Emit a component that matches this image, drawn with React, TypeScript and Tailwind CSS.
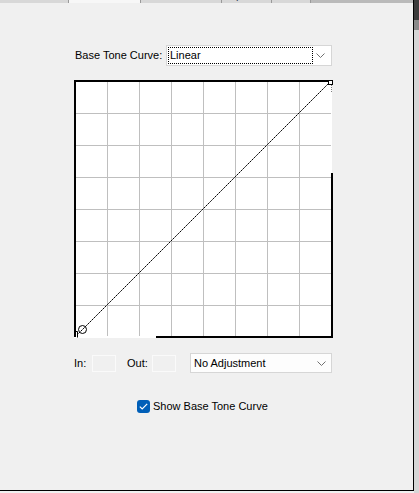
import React from "react";

const font = "font-['Liberation_Sans','Arial',sans-serif]";

function Chevron() {
  return (
    <svg width="9" height="5" viewBox="0 0 9 5" fill="none" aria-hidden="true">
      <path d="M0.5 0.5L4.5 4.5L8.5 0.5" stroke="#707070" strokeWidth="1" />
    </svg>
  );
}

function CurveGraph() {
  const grid = [33, 65, 97, 129, 161, 193, 225];
  return (
    <svg width="259" height="258" viewBox="0 0 259 258" className="block" aria-hidden="true">
      <rect x="0" y="0" width="258" height="258" fill="#ffffff" />
      {grid.map((g) => (
        <line key={`v${g}`} x1={g + 0.5} y1="2" x2={g + 0.5} y2="256" stroke="#bfbfbf" strokeWidth="1" />
      ))}
      {grid.map((g) => (
        <line key={`h${g}`} x1="2" y1={g + 0.5} x2="257" y2={g + 0.5} stroke="#bfbfbf" strokeWidth="1" />
      ))}
      {/* border, with the gaps the original shows */}
      <rect x="0" y="0" width="258" height="2" fill="#000" />
      <rect x="0" y="0" width="2" height="257" fill="#000" />
      <rect x="257" y="93" width="2" height="165" fill="#000" />
      <rect x="82" y="256" width="177" height="2" fill="#000" />
      <line x1="257.5" y1="5" x2="257.5" y2="12" stroke="#808080" strokeWidth="1" strokeDasharray="1 1" />
      {/* base curve */}
      <line x1="3" y1="255" x2="256" y2="2" stroke="#000" strokeWidth="1" strokeDasharray="2 0.6" />
      <circle cx="8.5" cy="249.5" r="4" fill="none" stroke="#000" strokeWidth="1" />
      <rect x="254.5" y="0.5" width="4" height="4" fill="#fff" stroke="#000" strokeWidth="1" />
      <path d="M0.5 251.5H3.5V257.5" stroke="#000" strokeWidth="1" fill="none" />
    </svg>
  );
}

const tabs = [
  { label: "Color Tables", width: "w-[69px]", active: false },
  { label: "Tone Curve", width: "w-[72px]", active: true },
  { label: "Color Matrices", width: "w-[81px]", active: false },
  { label: "Options", width: "w-[50px]", active: false },
  { label: "Chart", width: "w-[39px]", active: false },
];

export default function App() {
  return (
    <div className={`flex h-[493px] w-[419px] overflow-hidden bg-[#f0f0f0] text-[11px] text-black ${font}`}>
      <div className="flex h-[491px] w-[414px] shrink-0 flex-col border-r border-b border-black">
        {/* clipped tab strip */}
        <div className="flex h-[3px] shrink-0 overflow-hidden bg-[#bababa]">
          {tabs.map((tab) => (
            <div
              key={tab.label}
              className={`${tab.width} h-[3px] shrink-0 overflow-hidden border-r border-[#9a9a9a] text-center ${
                tab.active ? "bg-[#f7f7f7]" : "bg-[#d8d8d8]"
              }`}
            >
              <div className="-mt-[11px] leading-[13px] text-[#2a3550]">{tab.label}</div>
            </div>
          ))}
        </div>

        <div className="pl-[74px]">
          <div className="mt-[42px] flex h-[21px] items-center">
            <span className="w-[92px] whitespace-nowrap pl-px">Base Tone Curve:</span>
            <div className="flex h-[21px] w-[166px] items-center border border-[#d6d6d6] bg-white pl-[1px] pr-[6px]">
              <div className="flex h-[17px] w-[145px] items-center border border-dotted border-black pl-px leading-none">
                Linear
              </div>
              <div className="ml-auto flex items-center">
                <Chevron />
              </div>
            </div>
          </div>

          <div className="mt-[14px]">
            <CurveGraph />
          </div>

          <div className="mt-[15px] flex h-[20px] items-center">
            <span className="w-[18px]">In:</span>
            <div className="h-[17px] w-[24px] border border-[#fafafa]" />
            <span className="ml-[11px] w-[25px]">Out:</span>
            <div className="h-[17px] w-[24px] border border-[#fafafa]" />
            <div className="ml-[14px] flex h-[20px] w-[142px] items-center border border-[#d6d6d6] bg-[#fdfdfd] pl-[3px] pr-[5px]">
              <span>No Adjustment</span>
              <div className="ml-auto flex items-center">
                <Chevron />
              </div>
            </div>
          </div>

          <div className="mt-[25px] flex items-center pl-[63px]">
            <div className="flex h-[13px] w-[13px] items-center justify-center rounded-[3px] bg-[#005fb8]">
              <svg width="9" height="7" viewBox="0 0 9 7" fill="none" aria-hidden="true">
                <path d="M0.8 3.6L3.2 5.9L8.2 0.8" stroke="#fff" strokeWidth="1.2" />
              </svg>
            </div>
            <span className="ml-[3px]">Show Base Tone Curve</span>
          </div>
        </div>
      </div>

      {/* scrollbar sliver */}
      <div className="flex w-[5px] flex-col">
        <div className="h-[20px] bg-[#3c3c3c]" />
        <div className="h-[10px] bg-[#8a8a8a]" />
        <div className="flex-1 bg-[#d6d6d6]" />
      </div>
    </div>
  );
}
